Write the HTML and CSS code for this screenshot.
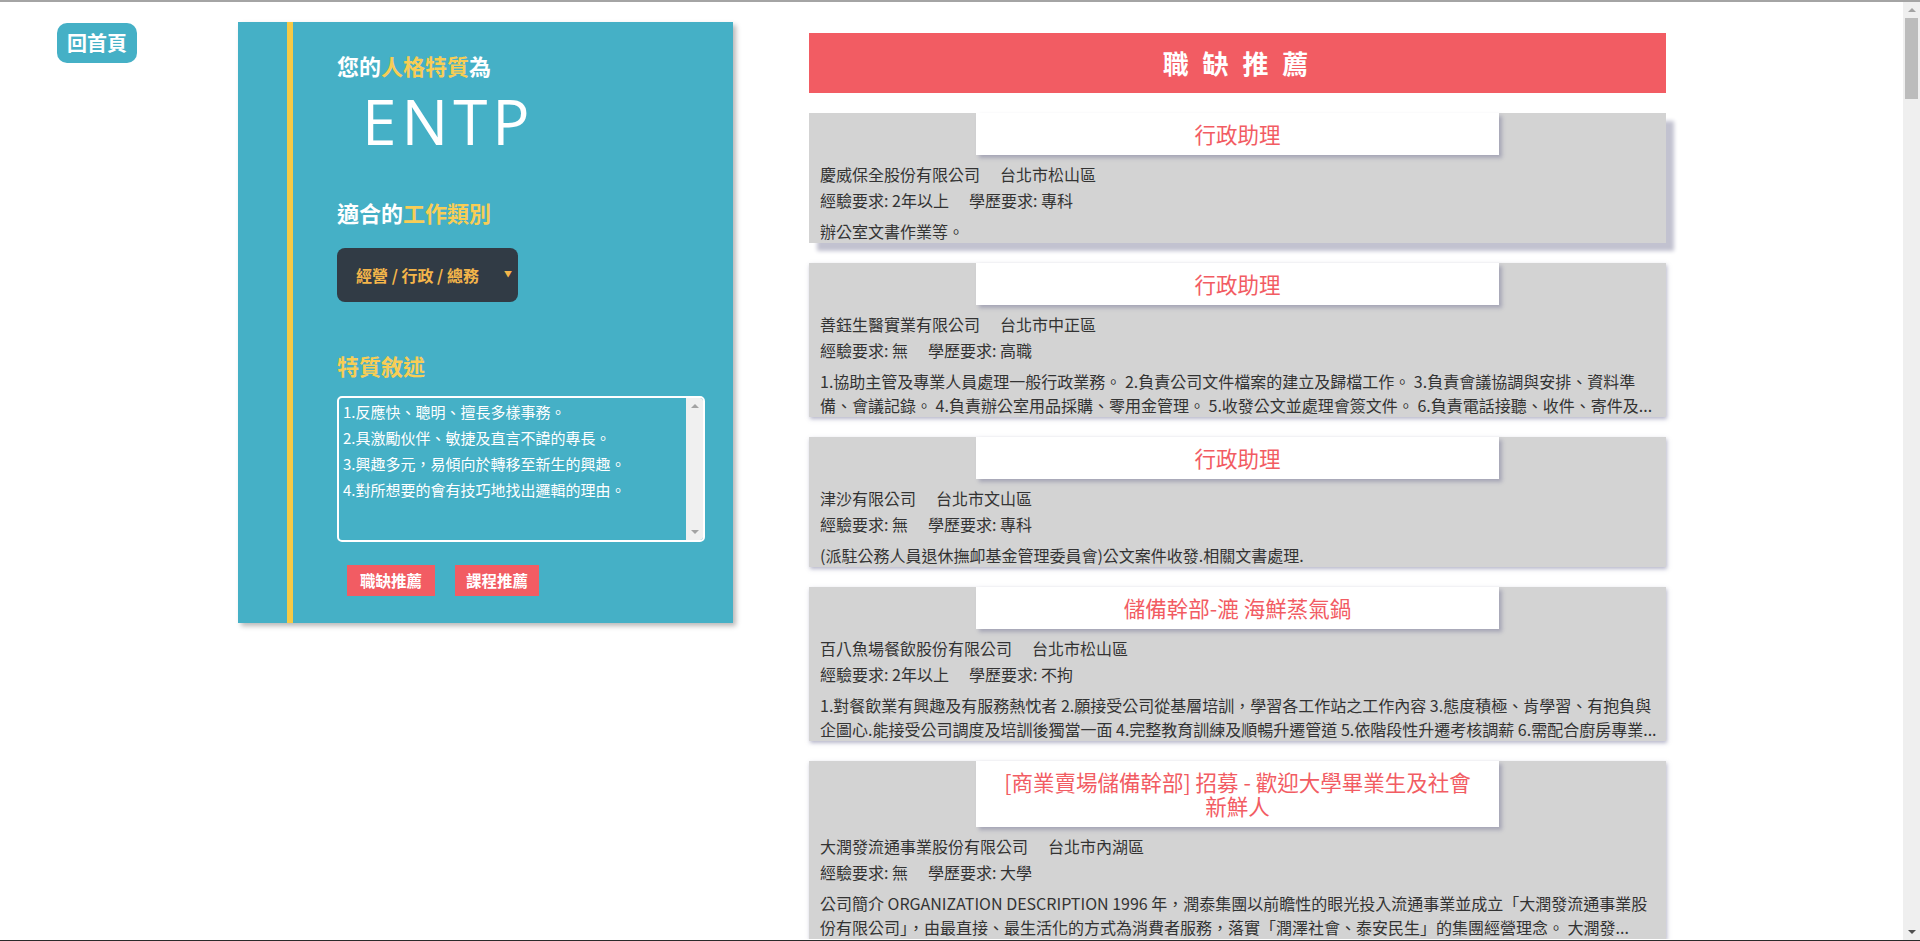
FILE: index.html
```html
<!DOCTYPE html>
<html lang="zh-Hant">
<head>
<meta charset="utf-8">
<title>職缺推薦</title>
<link rel="stylesheet" href="styles.css">
</head>
<body>
<div class="page">
  <a class="home-btn" href="#">回首頁</a>

  <section class="profile">
    <div class="profile-inner">
      <h2 class="p-head p-head1">您的<span class="hl">人格特質</span>為</h2>
      <div class="mbti">ENTP</div>
      <h2 class="p-head p-head2">適合的<span class="hl">工作類別</span></h2>
      <div class="select"><span class="select-text">經營 / 行政 / 總務</span><span class="caret">▼</span></div>
      <h2 class="p-head p-head3 hl">特質敘述</h2>
      <div class="traits">
        <div class="traits-text">1.反應快、聰明、擅長多樣事務。<br>2.具激勵伙伴、敏捷及直言不諱的專長。<br>3.興趣多元，易傾向於轉移至新生的興趣。<br>4.對所想要的會有技巧地找出邏輯的理由。</div>
        <div class="traits-scroll"><span class="arr arr-up"></span><span class="arr arr-down"></span></div>
      </div>
      <div class="actions">
        <a class="btn btn-job" href="#">職缺推薦</a>
        <a class="btn btn-course" href="#">課程推薦</a>
      </div>
    </div>
  </section>

  <main class="jobs">
    <h1 class="jobs-head">職 缺 推 薦</h1>

    <article class="job job-active">
      <h3 class="job-title">行政助理</h3>
      <p class="job-line"><span>慶威保全股份有限公司</span><span class="gap">台北市松山區</span></p>
      <p class="job-line"><span>經驗要求: 2年以上</span><span class="gap">學歷要求: 專科</span></p>
      <p class="job-desc">辦公室文書作業等。</p>
    </article>

    <article class="job">
      <h3 class="job-title">行政助理</h3>
      <p class="job-line"><span>善鈺生醫實業有限公司</span><span class="gap">台北市中正區</span></p>
      <p class="job-line"><span>經驗要求: 無</span><span class="gap">學歷要求: 高職</span></p>
      <p class="job-desc">1.協助主管及專業人員處理一般行政業務。 2.負責公司文件檔案的建立及歸檔工作。 3.負責會議協調與安排、資料準備、會議記錄。 4.負責辦公室用品採購、零用金管理。 5.收發公文並處理會簽文件。 6.負責電話接聽、收件、寄件及...</p>
    </article>

    <article class="job">
      <h3 class="job-title">行政助理</h3>
      <p class="job-line"><span>津沙有限公司</span><span class="gap">台北市文山區</span></p>
      <p class="job-line"><span>經驗要求: 無</span><span class="gap">學歷要求: 專科</span></p>
      <p class="job-desc">(派駐公務人員退休撫卹基金管理委員會)公文案件收發.相關文書處理.</p>
    </article>

    <article class="job">
      <h3 class="job-title">儲備幹部-漉 海鮮蒸氣鍋</h3>
      <p class="job-line"><span>百八魚場餐飲股份有限公司</span><span class="gap">台北市松山區</span></p>
      <p class="job-line"><span>經驗要求: 2年以上</span><span class="gap">學歷要求: 不拘</span></p>
      <p class="job-desc">1.對餐飲業有興趣及有服務熱忱者 2.願接受公司從基層培訓，學習各工作站之工作內容 3.態度積極、肯學習、有抱負與企圖心.能接受公司調度及培訓後獨當一面 4.完整教育訓練及順暢升遷管道 5.依階段性升遷考核調薪 6.需配合廚房專業...</p>
    </article>

    <article class="job">
      <h3 class="job-title">[商業賣場儲備幹部] 招募 - 歡迎大學畢業生及社會<span class="nowrap">新鮮人</span></h3>
      <p class="job-line"><span>大潤發流通事業股份有限公司</span><span class="gap">台北市內湖區</span></p>
      <p class="job-line"><span>經驗要求: 無</span><span class="gap">學歷要求: 大學</span></p>
      <p class="job-desc">公司簡介 ORGANIZATION DESCRIPTION 1996 年，潤泰集團以前瞻性的眼光投入流通事業並成立「大潤發流通事業股份有限公司」，由最直接、最生活化的方式為消費者服務，落實「潤澤社會、泰安民生」的集團經營理念。 大潤發...</p>
    </article>
  </main>
</div>

<div class="fake-scrollbar" aria-hidden="true">
  <span class="sb-arrow sb-up"></span>
  <span class="sb-thumb"></span>
  <span class="sb-arrow sb-down"></span>
</div>
</body>
</html>
```

FILE: styles.css
```css
html {
  border-top: 2px solid #a4a4a4;
}

body {
  margin: 0;
  background: #ffffff;
  font-family: "Noto Sans CJK TC", "Noto Sans", sans-serif;
  color: #333333;
}

body::after {
  content: "";
  position: fixed;
  left: 0;
  right: 0;
  bottom: 0;
  height: 1px;
  background: #2a2a2a;
}

.page {
  display: flex;
  align-items: flex-start;
  padding: 20px 0 0 57px;
}

/* home button */
.home-btn {
  flex: none;
  margin-top: 1px;
  padding: 0 10px;
  height: 40px;
  line-height: 40px;
  border-radius: 10px;
  background: #45b0c6;
  color: #ffffff;
  font-size: 20px;
  font-weight: 700;
  text-decoration: none;
}

/* left profile panel */
.profile {
  flex: none;
  display: flex;
  width: 495px;
  margin-left: 101px;
  padding-left: 49px;
  box-sizing: border-box;
  background: #45b0c6;
  box-shadow: 3px 3px 5px rgba(0, 0, 0, 0.28);
}

.profile-inner {
  flex: 1;
  border-left: 6px solid #f6c944;
  padding: 31px 0 27px 44px;
}

.p-head {
  margin: 0;
  font-size: 22px;
  line-height: 24px;
  font-weight: 700;
  color: #ffffff;
}

.hl {
  color: #f8cd55;
}

.mbti {
  margin: 9px 0 0 25px;
  font-family: "Open Sans", "Noto Sans", sans-serif;
  font-size: 62px;
  line-height: 70px;
  font-weight: 400;
  letter-spacing: 5px;
  color: #ffffff;
}

.p-head2 {
  margin-top: 44px;
}

.select {
  display: flex;
  align-items: center;
  width: 181px;
  height: 54px;
  margin-top: 24px;
  padding: 0 6px 0 19px;
  box-sizing: border-box;
  border-radius: 8px;
  background: #313b45;
  color: #f4b54a;
}

.select-text {
  font-size: 16px;
  font-weight: 700;
  white-space: pre;
}

.caret {
  margin-left: auto;
  margin-top: -4px;
  font-size: 8px;
}

.p-head3 {
  margin-top: 51px;
  color: #f8cd55;
}

.traits {
  display: flex;
  width: 368px;
  height: 146px;
  margin-top: 19px;
  box-sizing: border-box;
  border: 2px solid #ffffff;
  border-radius: 5px;
  overflow: hidden;
}

.traits-text {
  flex: 1;
  padding: 1px 4px;
  font-size: 15px;
  line-height: 26px;
  color: #ffffff;
}

.traits-scroll {
  flex: none;
  width: 17px;
  display: flex;
  flex-direction: column;
  justify-content: space-between;
  align-items: center;
  padding: 6px 0;
  box-sizing: border-box;
  background: #f0f0f0;
}

.arr {
  width: 0;
  height: 0;
  border-left: 4px solid transparent;
  border-right: 4px solid transparent;
}

.arr-up {
  border-bottom: 4px solid #a3a3a3;
}

.arr-down {
  border-top: 4px solid #a3a3a3;
}

.actions {
  display: flex;
  gap: 20px;
  margin: 23px 0 0 10px;
}

.btn {
  height: 31px;
  line-height: 31px;
  background: #f25c63;
  color: #ffffff;
  font-size: 15.5px;
  font-weight: 700;
  text-decoration: none;
}

.btn-job {
  padding: 0 13px;
}

.btn-course {
  padding: 0 11px;
}

/* right job column */
.jobs {
  flex: none;
  width: 857px;
  margin-left: 76px;
  padding-top: 11px;
}

.jobs-head {
  margin: 0 0 20px;
  height: 60px;
  line-height: 60px;
  background: #f25c63;
  color: #ffffff;
  text-align: center;
  font-size: 26px;
  font-weight: 700;
  letter-spacing: 4px;
}

.job {
  margin-bottom: 20px;
  padding: 0 11px;
  background: #d3d3d3;
  box-shadow: 1px 2px 4px rgba(110, 110, 150, 0.5);
}

.job:last-child {
  margin-bottom: 0;
}

.job-active {
  box-shadow: 8px 8px 4px #c2c2d0;
}

.job-title {
  width: 523px;
  margin: 0 auto;
  padding: 9px 0;
  background: #ffffff;
  box-shadow: 3px 3px 4px #a6a6b6;
  color: #f25c63;
  font-size: 21.5px;
  line-height: 24px;
  font-weight: 400;
  text-align: center;
}

.nowrap {
  white-space: nowrap;
}

.job-line {
  margin: 0;
  font-size: 16px;
  line-height: 26px;
}

.job-title + .job-line {
  margin-top: 6px;
}

.gap {
  margin-left: 20px;
}

.job-desc {
  margin: 6px -6px 0 0;
  font-size: 16px;
  line-height: 24px;
}

/* browser-style scrollbar drawn over the right edge */
.fake-scrollbar {
  position: fixed;
  top: 2px;
  right: 0;
  bottom: 1px;
  width: 17px;
  display: flex;
  flex-direction: column;
  align-items: center;
  background: #efefef;
}

.sb-arrow {
  width: 0;
  height: 0;
  border-left: 4px solid transparent;
  border-right: 4px solid transparent;
}

.sb-up {
  margin-top: 6px;
  border-bottom: 4px solid #a3a3a3;
}

.sb-thumb {
  width: 13px;
  height: 81px;
  margin-top: 6px;
  background: #bcbcbc;
}

.sb-down {
  margin-top: auto;
  margin-bottom: 6px;
  border-top: 4px solid #505050;
}
```
